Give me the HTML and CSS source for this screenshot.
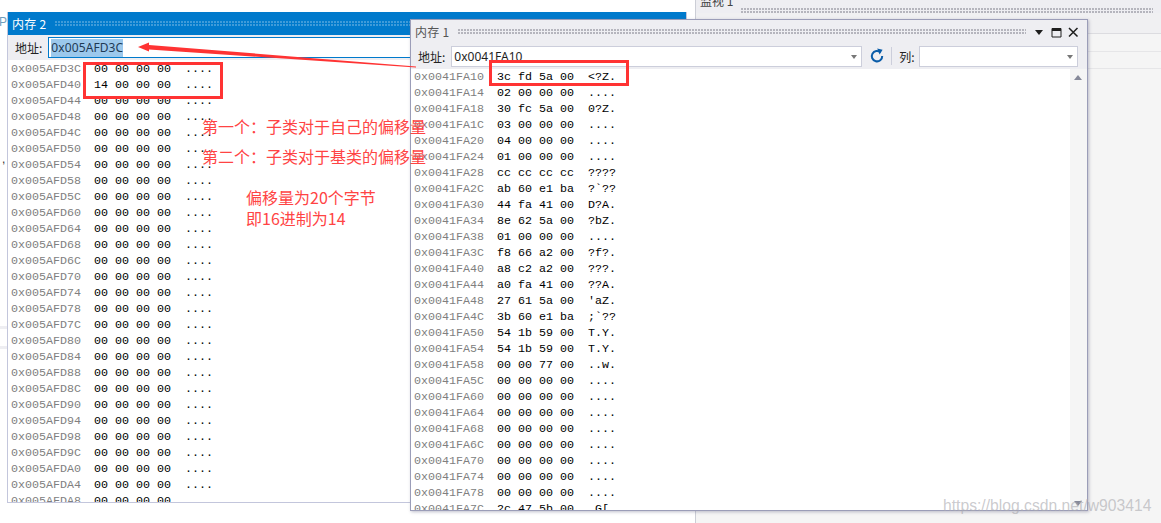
FILE: index.html
```html
<!DOCTYPE html>
<html lang="zh">
<head>
<meta charset="utf-8">
<title>内存</title>
<link rel="stylesheet" href="styles.css">
</head>
<body>
<div class="desk">
  <div class="bg-left">
    <span class="ghost ghost-p">Pe</span>
    <span class="ghost ghost-c">,</span>
    <span class="band band-a"></span>
    <span class="band band-b"></span>
  </div>
  <div class="bg-right">
    <div class="watch-tab"><span class="watch-title">监视 1</span><span class="grip grip-watch"></span></div>
    <div class="watch-head"><span class="watch-col">名称</span></div>
    <div class="watch-line"></div>
    <div class="watch-line watch-line-last"></div>
  </div>

  <section class="win win-two">
    <header class="title title-active"><span class="title-text">内存 2</span><span class="grip grip-active"></span></header>
    <div class="tools">
      <span class="lbl">地址:</span>
      <div class="addr addr-active"><span class="sel">0x005AFD3C</span></div>
    </div>
    <div class="rows rows-two">
      <div class="row"><span class="a">0x005AFD3C</span><span class="h">00 00 00 00</span><span class="t">....</span></div>
      <div class="row"><span class="a">0x005AFD40</span><span class="h">14 00 00 00</span><span class="t">....</span></div>
      <div class="row"><span class="a">0x005AFD44</span><span class="h">00 00 00 00</span><span class="t">....</span></div>
      <div class="row"><span class="a">0x005AFD48</span><span class="h">00 00 00 00</span><span class="t">....</span></div>
      <div class="row"><span class="a">0x005AFD4C</span><span class="h">00 00 00 00</span><span class="t">....</span></div>
      <div class="row"><span class="a">0x005AFD50</span><span class="h">00 00 00 00</span><span class="t">....</span></div>
      <div class="row"><span class="a">0x005AFD54</span><span class="h">00 00 00 00</span><span class="t">....</span></div>
      <div class="row"><span class="a">0x005AFD58</span><span class="h">00 00 00 00</span><span class="t">....</span></div>
      <div class="row"><span class="a">0x005AFD5C</span><span class="h">00 00 00 00</span><span class="t">....</span></div>
      <div class="row"><span class="a">0x005AFD60</span><span class="h">00 00 00 00</span><span class="t">....</span></div>
      <div class="row"><span class="a">0x005AFD64</span><span class="h">00 00 00 00</span><span class="t">....</span></div>
      <div class="row"><span class="a">0x005AFD68</span><span class="h">00 00 00 00</span><span class="t">....</span></div>
      <div class="row"><span class="a">0x005AFD6C</span><span class="h">00 00 00 00</span><span class="t">....</span></div>
      <div class="row"><span class="a">0x005AFD70</span><span class="h">00 00 00 00</span><span class="t">....</span></div>
      <div class="row"><span class="a">0x005AFD74</span><span class="h">00 00 00 00</span><span class="t">....</span></div>
      <div class="row"><span class="a">0x005AFD78</span><span class="h">00 00 00 00</span><span class="t">....</span></div>
      <div class="row"><span class="a">0x005AFD7C</span><span class="h">00 00 00 00</span><span class="t">....</span></div>
      <div class="row"><span class="a">0x005AFD80</span><span class="h">00 00 00 00</span><span class="t">....</span></div>
      <div class="row"><span class="a">0x005AFD84</span><span class="h">00 00 00 00</span><span class="t">....</span></div>
      <div class="row"><span class="a">0x005AFD88</span><span class="h">00 00 00 00</span><span class="t">....</span></div>
      <div class="row"><span class="a">0x005AFD8C</span><span class="h">00 00 00 00</span><span class="t">....</span></div>
      <div class="row"><span class="a">0x005AFD90</span><span class="h">00 00 00 00</span><span class="t">....</span></div>
      <div class="row"><span class="a">0x005AFD94</span><span class="h">00 00 00 00</span><span class="t">....</span></div>
      <div class="row"><span class="a">0x005AFD98</span><span class="h">00 00 00 00</span><span class="t">....</span></div>
      <div class="row"><span class="a">0x005AFD9C</span><span class="h">00 00 00 00</span><span class="t">....</span></div>
      <div class="row"><span class="a">0x005AFDA0</span><span class="h">00 00 00 00</span><span class="t">....</span></div>
      <div class="row"><span class="a">0x005AFDA4</span><span class="h">00 00 00 00</span><span class="t">....</span></div>
      <div class="row"><span class="a">0x005AFDA8</span><span class="h">00 00 00 00</span></div>
    </div>
  </section>

  <section class="win win-one">
    <header class="title"><span class="title-text">内存 1</span><span class="grip"></span>
      <div class="win-btns">
        <svg class="ico" width="14" height="14" viewBox="0 0 14 14"><path d="M3 5h8l-4 5z" fill="#1e1e1e"/></svg>
        <svg class="ico" width="14" height="14" viewBox="0 0 14 14"><path d="M3 3.5h9v8.5H3zM3 4.5h9" fill="none" stroke="#1e1e1e" stroke-width="1"/><path d="M3 3h9v3H3z" fill="#1e1e1e"/></svg>
        <svg class="ico" width="14" height="14" viewBox="0 0 14 14"><path d="M3 3l8.5 8.5M11.5 3L3 11.5" fill="none" stroke="#1e1e1e" stroke-width="1.5"/></svg>
      </div>
    </header>
    <div class="tools tools-one">
      <span class="lbl">地址:</span>
      <div class="addr addr-wide"><span class="val">0x0041FA10</span><span class="caret"></span></div>
      <svg class="refresh" width="16" height="16" viewBox="0 0 16 16"><path d="M11.6 4.4A5.2 5.2 0 1 0 13.2 8" fill="none" stroke="#0a5ca8" stroke-width="2"/><path d="M8.2 0.6l5.4 1.2-3 4.6z" fill="#0a5ca8"/></svg>
      <span class="divider"></span>
      <span class="lbl lbl-col">列:</span>
      <div class="addr addr-col"><span class="caret"></span></div>
    </div>
    <div class="body-one">
      <div class="rows rows-one">
        <div class="row"><span class="a">0x0041FA10</span><span class="h">3c fd 5a 00</span><span class="t">&lt;?Z.</span></div>
        <div class="row"><span class="a">0x0041FA14</span><span class="h">02 00 00 00</span><span class="t">....</span></div>
        <div class="row"><span class="a">0x0041FA18</span><span class="h">30 fc 5a 00</span><span class="t">0?Z.</span></div>
        <div class="row"><span class="a">0x0041FA1C</span><span class="h">03 00 00 00</span><span class="t">....</span></div>
        <div class="row"><span class="a">0x0041FA20</span><span class="h">04 00 00 00</span><span class="t">....</span></div>
        <div class="row"><span class="a">0x0041FA24</span><span class="h">01 00 00 00</span><span class="t">....</span></div>
        <div class="row"><span class="a">0x0041FA28</span><span class="h">cc cc cc cc</span><span class="t">????</span></div>
        <div class="row"><span class="a">0x0041FA2C</span><span class="h">ab 60 e1 ba</span><span class="t">?`??</span></div>
        <div class="row"><span class="a">0x0041FA30</span><span class="h">44 fa 41 00</span><span class="t">D?A.</span></div>
        <div class="row"><span class="a">0x0041FA34</span><span class="h">8e 62 5a 00</span><span class="t">?bZ.</span></div>
        <div class="row"><span class="a">0x0041FA38</span><span class="h">01 00 00 00</span><span class="t">....</span></div>
        <div class="row"><span class="a">0x0041FA3C</span><span class="h">f8 66 a2 00</span><span class="t">?f?.</span></div>
        <div class="row"><span class="a">0x0041FA40</span><span class="h">a8 c2 a2 00</span><span class="t">???.</span></div>
        <div class="row"><span class="a">0x0041FA44</span><span class="h">a0 fa 41 00</span><span class="t">??A.</span></div>
        <div class="row"><span class="a">0x0041FA48</span><span class="h">27 61 5a 00</span><span class="t">'aZ.</span></div>
        <div class="row"><span class="a">0x0041FA4C</span><span class="h">3b 60 e1 ba</span><span class="t">;`??</span></div>
        <div class="row"><span class="a">0x0041FA50</span><span class="h">54 1b 59 00</span><span class="t">T.Y.</span></div>
        <div class="row"><span class="a">0x0041FA54</span><span class="h">54 1b 59 00</span><span class="t">T.Y.</span></div>
        <div class="row"><span class="a">0x0041FA58</span><span class="h">00 00 77 00</span><span class="t">..w.</span></div>
        <div class="row"><span class="a">0x0041FA5C</span><span class="h">00 00 00 00</span><span class="t">....</span></div>
        <div class="row"><span class="a">0x0041FA60</span><span class="h">00 00 00 00</span><span class="t">....</span></div>
        <div class="row"><span class="a">0x0041FA64</span><span class="h">00 00 00 00</span><span class="t">....</span></div>
        <div class="row"><span class="a">0x0041FA68</span><span class="h">00 00 00 00</span><span class="t">....</span></div>
        <div class="row"><span class="a">0x0041FA6C</span><span class="h">00 00 00 00</span><span class="t">....</span></div>
        <div class="row"><span class="a">0x0041FA70</span><span class="h">00 00 00 00</span><span class="t">....</span></div>
        <div class="row"><span class="a">0x0041FA74</span><span class="h">00 00 00 00</span><span class="t">....</span></div>
        <div class="row"><span class="a">0x0041FA78</span><span class="h">00 00 00 00</span><span class="t">....</span></div>
        <div class="row"><span class="a">0x0041FA7C</span><span class="h">2c 47 5b 00</span><span class="t">,G[.</span></div>
      </div>
      <div class="scroll"><span class="arrow-up"></span><span class="arrow-down"></span></div>
    </div>
  </section>

  <div class="redbox box-two"></div>
  <div class="redbox box-one"></div>
  <svg class="pointer" width="300" height="40" viewBox="0 0 300 40"><path d="M0 6L11 1.5L11 4L278 25.5L278 26.5L11 8.5L11 10.5Z" fill="#f33"/></svg>
  <p class="note note-a">第一个：子类对于自己的偏移量</p>
  <p class="note note-b">第二个：子类对于基类的偏移量</p>
  <p class="note note-c">偏移量为20个字节<br>即16进制为14</p>
  <span class="mark">https://blog.csdn.net/w903414</span>
</div>
</body>
</html>
```
FILE: styles.css
```css
html, body { margin: 0; padding: 0; background: #fff; }
.desk {
  position: relative;
  display: flex;
  width: 1161px;
  height: 523px;
  overflow: hidden;
  font-family: "Noto Sans CJK SC", "Noto Sans", sans-serif;
}
.bg-left { width: 696px; flex: none; background: #fff; border-right: 1px solid #ccced6; box-sizing: border-box; position: relative; }
.ghost { position: absolute; font-family: "Liberation Sans", sans-serif; font-size: 12px; line-height: 14px; color: #6f9dbb; }
.ghost-p { left: -1px; top: 15px; }
.ghost-c { left: 2px; top: 152px; color: #333; }
.band { position: absolute; left: 0; width: 7px; height: 3px; background: #eeeef2; }
.band-a { top: 326px; }
.band-b { top: 346px; }
.bg-right { flex: 1; background: #f5f5f5; display: flex; flex-direction: column; }
.watch-tab { height: 13px; background: #eeeef2; display: flex; align-items: flex-end; padding-left: 4px; overflow: hidden; }
.watch-title { font-size: 12px; line-height: 14px; color: #444; margin-bottom: 5px; white-space: nowrap; }
.grip-watch { margin: 0 0 6px 6px; height: 5px; }
.watch-head { height: 20px; border-bottom: 1px solid #dcdce0; background: #f0f0f2; font-size: 12px; padding-left: 17px; padding-top: 3px; box-sizing: content-box; color: #444; overflow: hidden; height: 17px; }
.watch-col { line-height: 12px; }
.watch-line { height: 17px; border-bottom: 1px solid #e6e6e8; }
.watch-line-last { height: 16px; }

.win { position: absolute; box-sizing: border-box; background: #fff; display: flex; flex-direction: column; overflow: hidden; }
.win-two { left: 7px; top: 12px; width: 680px; height: 491px; border: 1px solid #c3c6dc; border-top: 0; }
.win-one { left: 410px; top: 19px; width: 678px; height: 492px; border: 1px solid #9b9db8; box-shadow: 1px 1px 3px rgba(110,110,140,.45); }

.title { height: 23px; flex: none; display: flex; align-items: center; background: #eeeef2; padding-left: 4px; }
.title-active { background: #007acc; padding-left: 4px; }
.title-text { font-size: 12px; color: #555; white-space: nowrap; letter-spacing: .3px; }
.title-active .title-text { color: #fff; }
.grip {
  flex: 1; height: 5px; margin: 0 8px 0 8px;
  background-image: radial-gradient(circle at 1px 1px, #b5b5bd 0.8px, transparent 1px);
  background-size: 3px 3px;
}
.grip-active { background-image: radial-gradient(circle at 1px 1px, #3f9bd9 0.8px, transparent 1px); }
.win-btns { display: flex; gap: 3px; padding-right: 7px; margin-left: -2px; }
.ico { display: block; }

.tools { height: 25px; flex: none; display: flex; align-items: center; background: #eeeef2; padding-left: 7px; }
.tools-one { height: 26px; }
.lbl { font-size: 12px; color: #222; margin-right: 6px; white-space: nowrap; }
.addr { box-sizing: border-box; height: 21px; background: #fff; border: 1px solid #cccedb; display: flex; align-items: center; font-family: "Noto Sans", sans-serif; font-size: 12px; color: #1e1e1e; padding-left: 2px; position: relative; }
.addr-active { width: 640px; border-color: #007acc; }
.sel { background: #9bc8ec; line-height: 18px; color: #1e3a55; letter-spacing: .1px; }
.addr-wide { width: 411px; flex: none; }
.addr-col { width: 159px; flex: none; }
.caret { position: absolute; right: 4px; top: 8px; width: 0; height: 0; border-left: 3.5px solid transparent; border-right: 3.5px solid transparent; border-top: 4px solid #777; }
.refresh { margin-left: 7px; flex: none; }
.divider { width: 1px; height: 18px; background: #cccedb; margin: 0 7px 0 6px; flex: none; }
.lbl-col { margin-right: 4px; }

.rows { flex: 1; overflow: hidden; padding-left: 3px; background: #fff; }
.rows-two { padding-top: 1px; }
.body-one { flex: 1; display: flex; min-height: 0; }
.rows-one { padding-left: 3px; }
.row { display: flex; height: 16px; line-height: 16px; font-family: "Liberation Mono", monospace; font-size: 11.67px; color: #000; white-space: pre; }
.a { width: 83px; flex: none; color: #808080; }
.h { width: 91px; flex: none; }
.t { flex: none; }
.scroll { width: 17px; flex: none; background: #f5f5f5; position: relative; }
.arrow-up { position: absolute; left: 4px; top: 6px; width: 0; height: 0; border-left: 4.5px solid transparent; border-right: 4.5px solid transparent; border-bottom: 5px solid #868999; }
.arrow-down { position: absolute; left: 4px; bottom: 4px; width: 0; height: 0; border-left: 4.5px solid transparent; border-right: 4.5px solid transparent; border-top: 5px solid #868999; }

.redbox { position: absolute; box-sizing: border-box; border: 3px solid #f33; }
.box-two { left: 83px; top: 62px; width: 140px; height: 37px; }
.box-one { left: 489px; top: 60px; width: 140px; height: 26px; }
.pointer { position: absolute; left: 138px; top: 41px; }
.note { position: absolute; margin: 0; color: #f44; font-size: 16px; line-height: 22px; white-space: nowrap; font-family: "Noto Sans CJK SC", sans-serif; }
.note-a { left: 202px; top: 115px; }
.note-b { left: 202px; top: 145px; }
.note-c { left: 246px; top: 187px; line-height: 21px; }
.mark { position: absolute; left: 943px; top: 497px; font-family: "Liberation Sans", sans-serif; font-size: 15.7px; color: rgba(170,170,175,.62); white-space: nowrap; }
```
